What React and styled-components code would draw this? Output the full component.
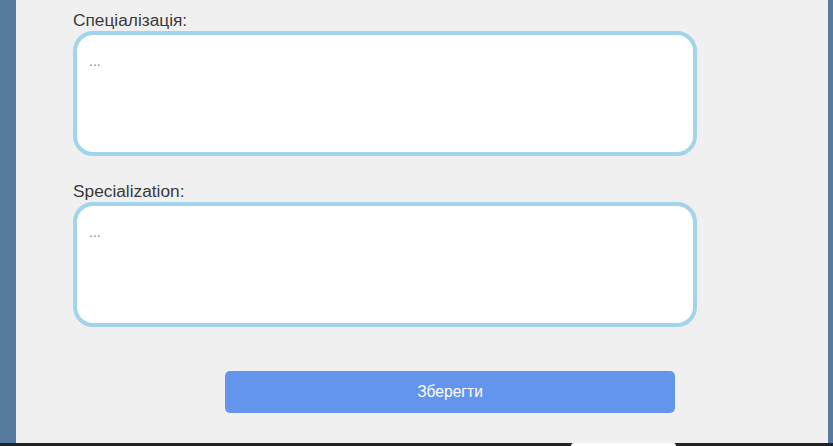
import styled, { createGlobalStyle } from 'styled-components';

const GlobalStyle = createGlobalStyle`
  html, body {
    margin: 0;
    padding: 0;
    overflow: hidden;
  }
  body {
    font-family: Arial, "Liberation Sans", sans-serif;
  }
`;

const Screen = styled.div`
  position: relative;
  width: 833px;
  height: 446px;
  display: flex;
  flex-direction: column;
  background-color: #222325;
  overflow: hidden;
`;

const Main = styled.div`
  display: flex;
  height: 443px;
`;

const SideStrip = styled.div`
  width: ${(p) => p.$width}px;
  flex-shrink: 0;
  background-color: #577b9f;
`;

const Panel = styled.div`
  flex: 1;
  background-color: #f0f0f0;
  padding: 11px 0 0 57px;
  display: flex;
  flex-direction: column;
`;

const Field = styled.div`
  display: flex;
  flex-direction: column;
  margin-bottom: ${(p) => p.$gap || 0}px;
`;

const Label = styled.label`
  font-size: 17.3px;
  line-height: 19px;
  color: #3a3a3a;
  margin-bottom: 1px;
`;

const TextArea = styled.textarea`
  box-sizing: border-box;
  width: 624px;
  height: 125px;
  border: 4px solid #a2d4ec;
  border-radius: 20px;
  background-color: #ffffff;
  padding: 18px 12px;
  font-family: Arial, "Liberation Sans", sans-serif;
  font-size: 14px;
  line-height: 16px;
  color: #333;
  resize: none;
  outline: none;

  &::placeholder {
    color: #8a8a8a;
    opacity: 1;
  }
`;

const SaveButton = styled.button`
  margin: 44px 0 0 152px;
  width: 450px;
  height: 42px;
  border: none;
  border-radius: 5px;
  background-color: #6495ed;
  color: #ffffff;
  font-family: Arial, "Liberation Sans", sans-serif;
  font-size: 15.6px;
  cursor: pointer;
`;

const BottomTab = styled.div`
  position: absolute;
  left: 571px;
  bottom: 0;
  width: 105px;
  height: 3px;
  background-color: #ffffff;
  border-radius: 4px 4px 0 0;
`;

export default function App() {
  return (
    <>
      <GlobalStyle />
      <Screen>
        <Main>
          <SideStrip $width={16} />
          <Panel>
            <Field $gap={26}>
              <Label>Спеціалізація:</Label>
              <TextArea placeholder="..." />
            </Field>
            <Field>
              <Label>Specialization:</Label>
              <TextArea placeholder="..." />
            </Field>
            <SaveButton>Зберегти</SaveButton>
          </Panel>
          <SideStrip $width={5} />
        </Main>
        <BottomTab />
      </Screen>
    </>
  );
}
